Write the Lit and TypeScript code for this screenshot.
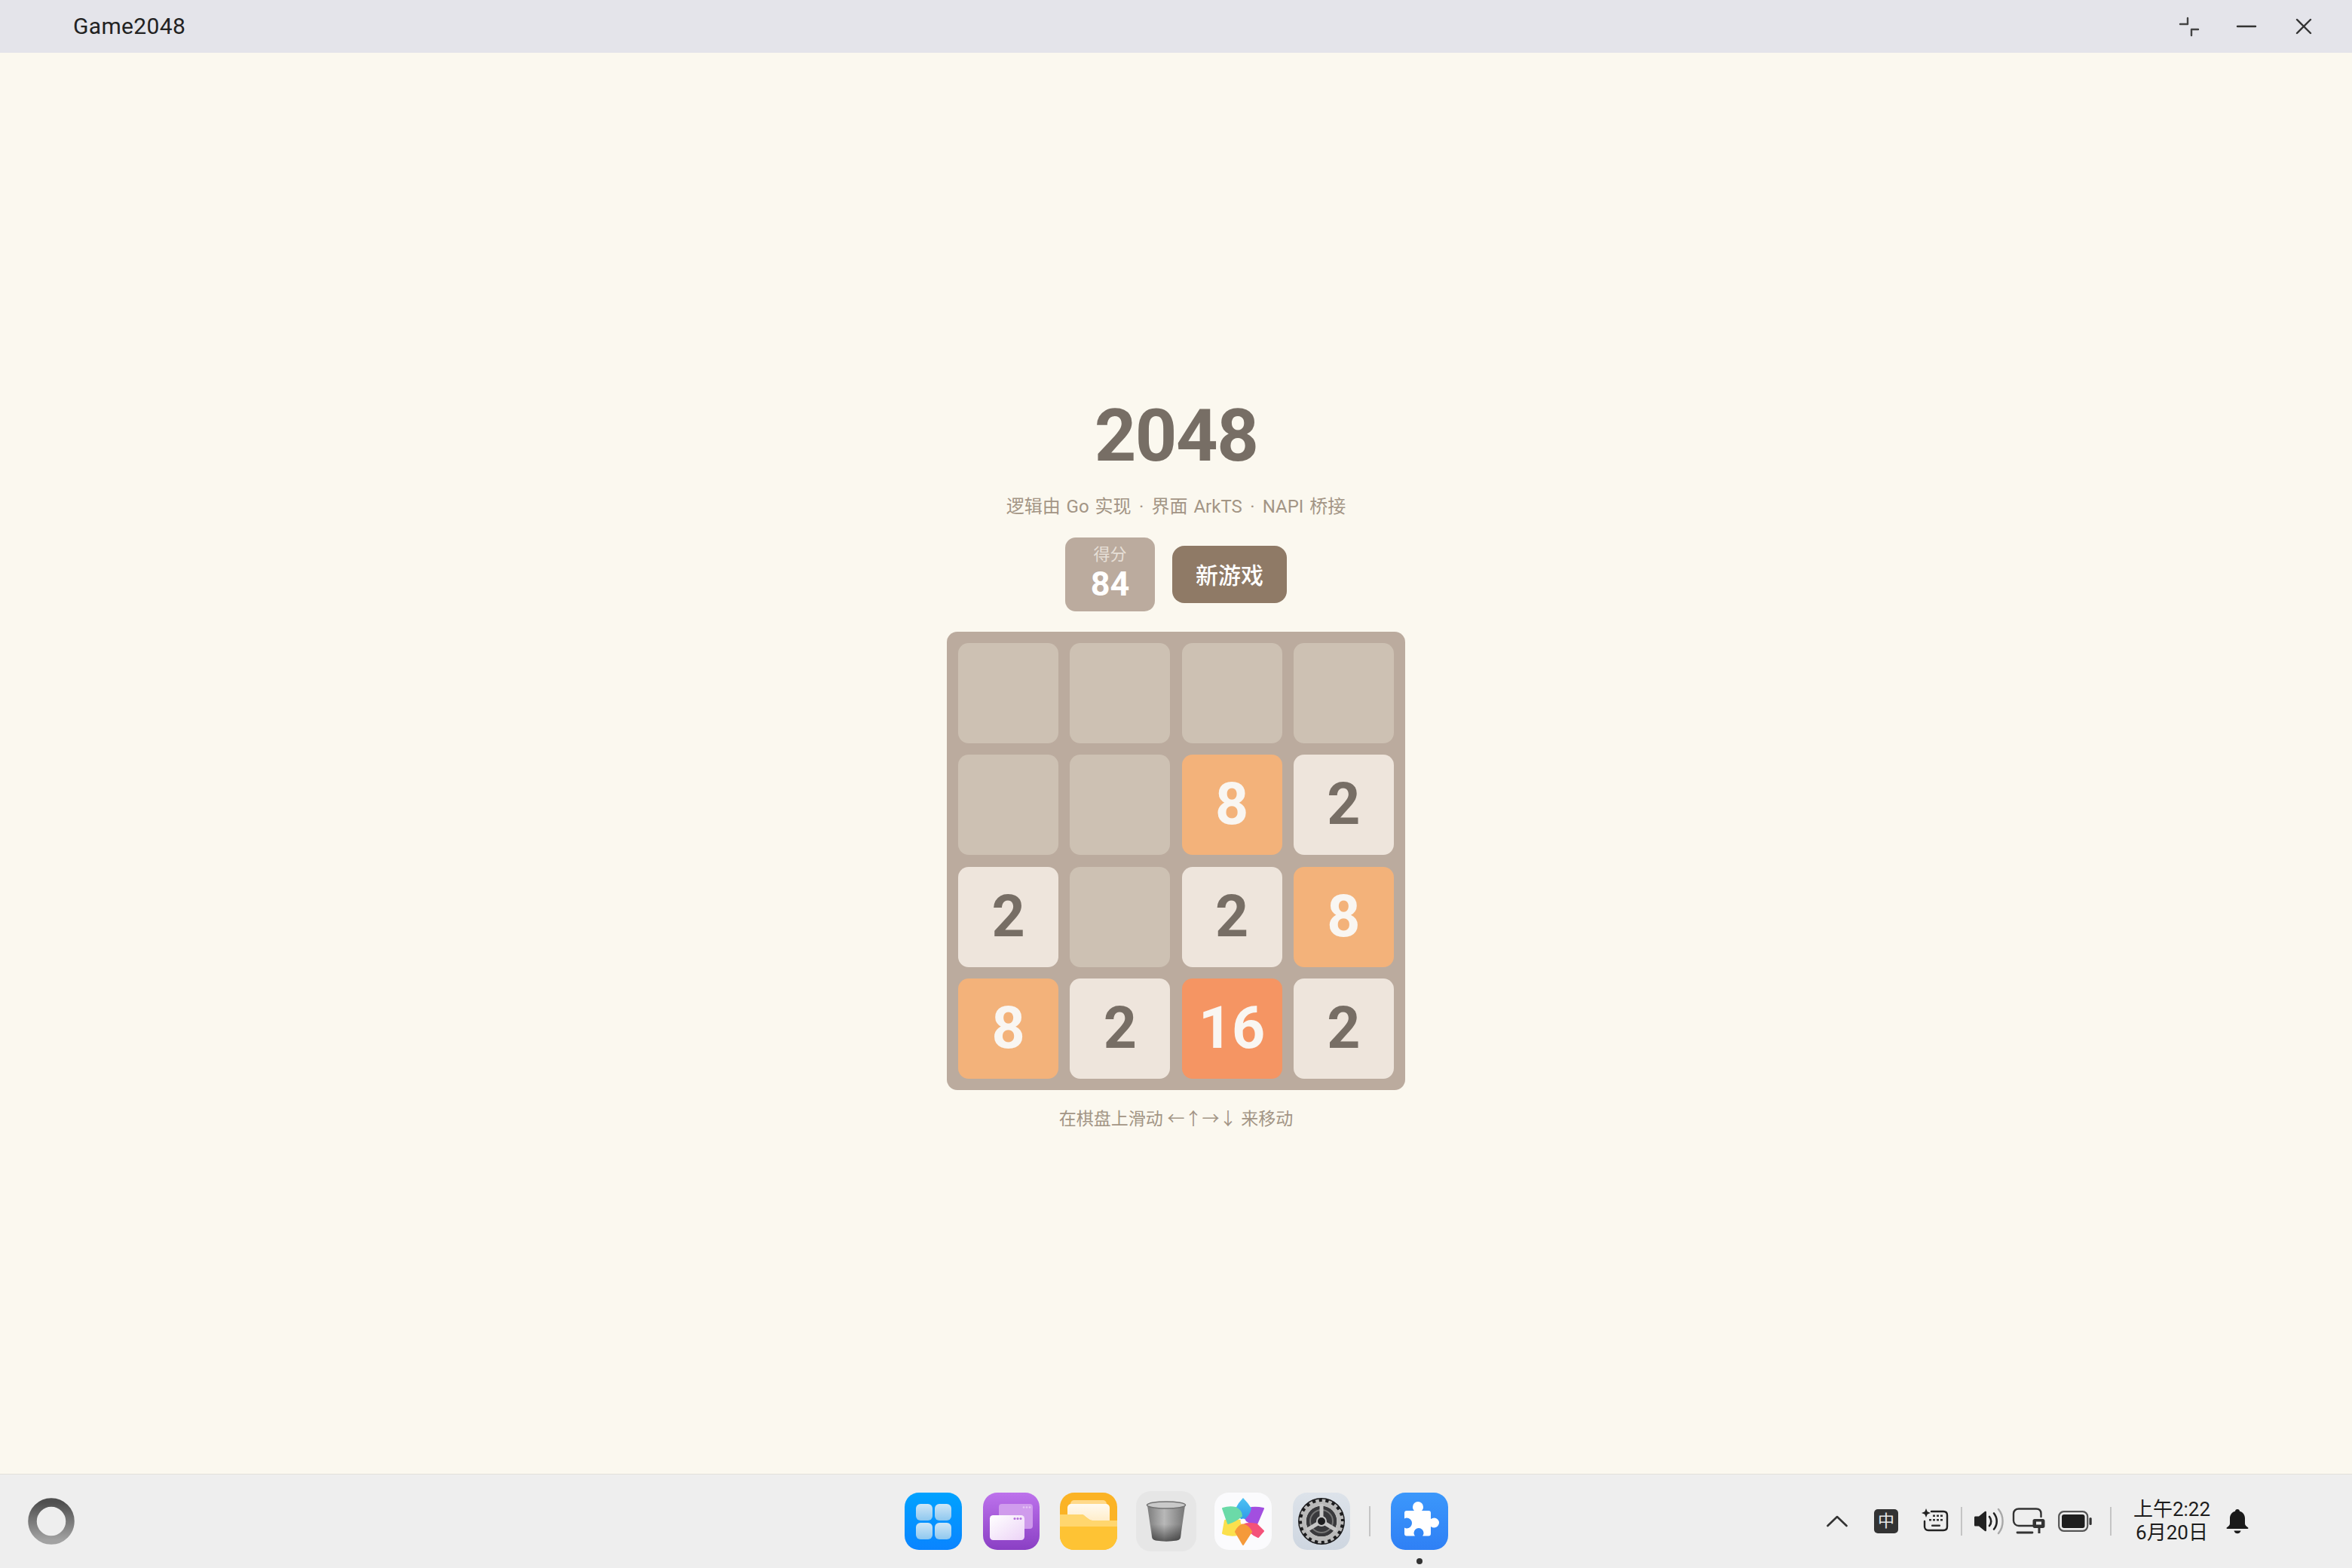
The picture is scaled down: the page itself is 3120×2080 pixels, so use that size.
import { LitElement, html, css } from "lit";
import { customElement } from "lit/decorators.js";

const cells = [0, 0, 0, 0, 0, 0, 8, 2, 2, 0, 2, 8, 8, 2, 16, 2];

@customElement("app-root")
export class AppRoot extends LitElement {
  static styles = css`
    :host { display: flex; flex-direction: column; width: 3120px; height: 2080px; overflow: hidden; font-family: Roboto, "Noto Sans CJK SC", sans-serif; background: #fbf8ef; }
    .titlebar { height: 70px; background: #e4e4ea; display: flex; align-items: center; justify-content: space-between; padding: 0 44px 0 97px; flex: none; }
    .titlebar .name { font-size: 30px; color: #222; letter-spacing: .35px; margin-top: -2px; }
    .winbtns { display: flex; gap: 36px; align-items: center; }
    .winbtns svg { width: 40px; height: 40px; display: block; }
    .page { flex: 1; display: flex; flex-direction: column; align-items: center; padding-top: 444px; min-height: 0; }
    h1 { margin: 0; font-size: 97px; line-height: 128px; font-weight: 700; color: #776e65; font-family: Roboto, sans-serif; letter-spacing: -1.500px; }
    .sub { margin-top: 12px; font-size: 24px; line-height: 36px; color: #a39585; white-space: pre; word-spacing: 2px; }
    .mid { display: inline-block; width: 11px; text-align: center; }
    .controls { margin-top: 23px; display: flex; align-items: center; gap: 23px; }
    .score { width: 119px; height: 98px; border-radius: 14px; background: #bbab9e; display: flex; flex-direction: column; align-items: center; }
    .score .lbl { font-size: 22px; line-height: 28px; color: #e6dfd6; margin-top: 9px; }
    .score .val { font-size: 45px; line-height: 48px; font-weight: 700; color: #fff; margin-top: 1px; }
    .btn { width: 152px; height: 76px; box-sizing: border-box; padding-bottom: 3px; border-radius: 16px; background: #8f7a66; color: #fff; display: flex; align-items: center; justify-content: center; font-size: 30px; font-weight: 500; }
    .board { margin-top: 27px; width: 608px; height: 608px; padding: 15.2px; box-sizing: border-box; background: #bbab9e; border-radius: 14px; display: grid; grid-template-columns: repeat(4, 1fr); grid-template-rows: repeat(4, 1fr); gap: 15.2px; }
    .cell { border-radius: 14px; background: #cdc1b3; display: flex; align-items: center; justify-content: center; font-size: 77px; font-weight: 700; font-family: Roboto, sans-serif; line-height: 1; }
    .v2 { background: #eee5dc; color: #776e65; }
    .v8 { background: #f3b27a; color: #f9f6f2; }
    .v16 { background: #f59563; color: #f9f6f2; }
    .hint { margin-top: 22px; font-size: 23px; line-height: 34px; color: #a39585; white-space: pre; }
    .taskbar { height: 125px; flex: none; box-sizing: border-box; background: #eeeeee; border-top: 1.500px solid #e3e1da; display: grid; grid-template-columns: 1fr auto 1fr; align-items: center; }
    .ring { margin-left: 37px; width: 62px; height: 62px; display: block; }
    .dock { display: flex; align-items: center; }
    .dock svg.app { display: block; width: 76px; height: 76px; flex: none; }
    .dock svg.app.trash { width: 80px; height: 80px; }
    .sep { width: 2px; height: 40px; background: #c4c4c4; flex: none; }
    .sep.short { height: 38px; }
    .ml11 { margin-left: 11px; } .ml15 { margin-left: 15px; } .ml16 { margin-left: 16px; } .ml17 { margin-left: 17px; }
    .ml24 { margin-left: 24px; } .ml25 { margin-left: 25px; } .ml26 { margin-left: 26px; } .ml27 { margin-left: 27px; }
    .ml28 { margin-left: 28px; } .ml31 { margin-left: 31px; } .ml34 { margin-left: 34px; } .ml35 { margin-left: 35px; }
    .active { position: relative; }
    .dot { position: absolute; left: 34px; bottom: -19px; width: 8px; height: 8px; border-radius: 50%; background: #333; }
    .tray { display: flex; align-items: center; justify-content: flex-end; padding-right: 137px; }
    .tray svg { display: block; flex: none; }
    .clock { font-size: 26px; line-height: 31px; color: #1c1c1c; text-align: center; width: 104px; margin: 0 20px 0 28px; white-space: nowrap; }
    .ime { width: 32px; height: 32px; border-radius: 5px; background: #333; color: #e8e8e8; display: flex; align-items: center; justify-content: center; font-size: 22px; line-height: 1; }
  `;

  render() {
    return html`
      <div class="titlebar">
        <div class="name">Game2048</div>
        <div class="winbtns">
          <svg viewBox="0 0 40 40" fill="none" stroke="#444" stroke-width="2.400" stroke-linecap="round" stroke-linejoin="round">
            <path d="M8 17h10V9" /><path d="M32 24H23v8"/>
          </svg>
          <svg viewBox="0 0 40 40" fill="none" stroke="#333" stroke-width="2.400" stroke-linecap="round"><path d="M8 20h24"/></svg>
          <svg viewBox="0 0 40 40" fill="none" stroke="#333" stroke-width="2.400" stroke-linecap="round"><path d="M11 11l18 18M29 11L11 29"/></svg>
        </div>
      </div>
      <div class="page">
        <h1>2048</h1>
        <div class="sub">逻辑由 Go 实现 <span class="mid">·</span> 界面 ArkTS <span class="mid">·</span> NAPI 桥接</div>
        <div class="controls">
          <div class="score"><span class="lbl">得分</span><span class="val">84</span></div>
          <div class="btn">新游戏</div>
        </div>
        <div class="board">
          ${cells.map((v) => html`<div class="cell ${v ? "v" + v : ""}">${v || ""}</div>`)}
        </div>
        <div class="hint">在棋盘上滑动 ←↑→↓ 来移动</div>
      </div>
      <div class="taskbar">
        <svg class="ring" viewBox="0 0 62 62">
          <defs><linearGradient id="rg" x1="0" y1="0" x2="0" y2="1"><stop offset="0" stop-color="#4f4f4f"/><stop offset="1" stop-color="#a2a2a2"/></linearGradient></defs>
          <circle cx="31" cy="31" r="25" fill="none" stroke="url(#rg)" stroke-width="11.500"/>
        </svg>
        <div class="dock">
          <svg class="app" viewBox="0 0 76 76">
            <defs><linearGradient id="b1" x1="0" y1="0" x2="0" y2="1"><stop offset="0" stop-color="#00a2ff"/><stop offset="1" stop-color="#0a84ff"/></linearGradient>
            <linearGradient id="t1" x1="0" y1="0" x2="0" y2="1"><stop offset="0" stop-color="#cfe6f6"/><stop offset="1" stop-color="#8fc8ef"/></linearGradient></defs>
            <rect width="76" height="76" rx="19" fill="url(#b1)"/>
            <g fill="url(#t1)"><rect x="15" y="15" width="22" height="22" rx="6"/><rect x="40" y="15" width="22" height="22" rx="6"/><rect x="15" y="40" width="22" height="22" rx="6"/><rect x="40" y="40" width="22" height="22" rx="6"/></g>
          </svg>
          <svg class="app ml28" viewBox="0 0 76 76">
            <defs><linearGradient id="b2" x1="0" y1="0" x2="0" y2="1"><stop offset="0" stop-color="#bd72ec"/><stop offset="1" stop-color="#8a3fc4"/></linearGradient>
            <linearGradient id="w2" x1="0" y1="0" x2="1" y2="1"><stop offset="0" stop-color="#fff"/><stop offset="1" stop-color="#ecd3f6"/></linearGradient></defs>
            <rect width="75" height="76" rx="19" fill="url(#b2)"/>
            <rect x="21" y="15" width="45" height="33" rx="4" fill="#d6a6ef" opacity=".85"/>
            <rect x="9" y="30" width="46" height="33" rx="4.500" fill="url(#w2)"/>
            <g fill="#b56fdc"><circle cx="42" cy="34.500" r="1.500"/><circle cx="46" cy="34.500" r="1.500"/><circle cx="50" cy="34.500" r="1.500"/></g>
            <g fill="#e5c5f5"><circle cx="54" cy="19.500" r="1.300"/><circle cx="58" cy="19.500" r="1.300"/><circle cx="62" cy="19.500" r="1.300"/></g>
          </svg>
          <svg class="app ml26" viewBox="0 0 76 76">
            <defs><linearGradient id="w3" x1="0" y1="0" x2="0" y2="1"><stop offset="0" stop-color="#fffaf0"/><stop offset="1" stop-color="#ffe9bd"/></linearGradient></defs>
            <rect width="76" height="76" rx="19" fill="#fbb325"/>
            <rect x="14" y="10" width="48" height="30" rx="5" fill="#ffd98a"/>
            <rect x="10" y="15" width="56" height="30" rx="5" fill="url(#w3)"/>
            <path d="M0 29h28c3 0 4 1 6 3l4 3c1.500 1 3 2 5 2h33v20c0 11-8 19-19 19H19C8 76 0 68 0 57z" fill="#fec334"/>
            <path d="M0 29h28c3 0 4 1 6 3l4 3c1.500 1 3 2 5 2h33v8H0z" fill="#ffd66e"/>
          </svg>
          <svg class="app trash ml25" viewBox="0 0 80 80">
            <defs><linearGradient id="tr" x1="0" y1="0" x2="1" y2="0"><stop offset="0" stop-color="#7d7d7d"/><stop offset=".45" stop-color="#b8b8b8"/><stop offset="1" stop-color="#767676"/></linearGradient>
            <linearGradient id="trb" x1="0" y1="0" x2="0" y2="1"><stop offset="0" stop-color="#000" stop-opacity="0"/><stop offset="1" stop-color="#000" stop-opacity=".5"/></linearGradient></defs>
            <rect width="80" height="80" rx="20" fill="#e6e6e6"/>
            <path d="M15 19l6 42c.4 3 3 4 5 4.500 9 1.500 19 1.500 28 0 2-.5 4.600-1.500 5-4.500l6-42z" fill="url(#tr)"/>
            <path d="M20 44l1.200 17c.4 3 3 4 5 4.500 9 1.500 19 1.500 28 0 2-.5 4.600-1.500 5-4.500L61 44z" fill="url(#trb)"/>
            <ellipse cx="40" cy="18.500" rx="25.500" ry="4.500" fill="#c9c9c9" stroke="#727272" stroke-width="1.500"/>
          </svg>
          <svg class="app ml24" viewBox="0 0 76 76">
            <defs><linearGradient id="p1" x1="0" y1="0" x2="0" y2="1"><stop offset="0" stop-color="#4dc3f3"/><stop offset="1" stop-color="#2f9ae8"/></linearGradient></defs>
            <rect width="76" height="76" rx="19" fill="#fbfbfd"/>
            <g stroke-width="2" stroke-linejoin="round">
              <path d="M65 21 Q56 19 49 20 L39 34 Q47 42 56 42z" fill="#a24fe0" stroke="#a24fe0"/>
              <path d="M65 51 L56 42 Q47 40 39 42 Q46 54 58 59z" fill="#f4527a" stroke="#f4527a"/>
              <path d="M11 54 L14 37 Q24 35 34 37 Q36 48 31 56 Q20 58 11 54z" fill="#fbe04d" stroke="#fbe04d"/>
              <path d="M38 69 L28 52 Q31 45 38 42 Q46 45 49 52z" fill="#f59a3a" stroke="#f59a3a"/>
              <path d="M38 7 Q44 13 49 21 Q47 31 38 37 Q29 31 28 21 Q32 13 38 7z" fill="url(#p1)" stroke="none"/>
              <path d="M11 21 Q20 18 28 20 Q36 24 36 31 Q28 38 18 41z" fill="#6bdaa8" stroke="#6bdaa8"/>
            </g>
            <circle cx="38" cy="38" r="3.500" fill="#fff"/>
          </svg>
          <svg class="app ml28" viewBox="0 0 76 76">
            <defs><linearGradient id="s1" x1="0" y1="0" x2="0" y2="1"><stop offset="0" stop-color="#dde3ea"/><stop offset="1" stop-color="#ced6e0"/></linearGradient></defs>
            <rect width="76" height="76" rx="19" fill="url(#s1)"/>
            <circle cx="38" cy="38" r="31" fill="#1d1d1f"/>
            <circle cx="38" cy="38" r="23" fill="none" stroke="#b9b9b9" stroke-width="6"/>
            <circle cx="38" cy="38" r="27" fill="none" stroke="#b9b9b9" stroke-width="5" stroke-dasharray="4.500 4"/>
            <circle cx="38" cy="38" r="20" fill="#39393c"/>
            <circle cx="38" cy="38" r="15" fill="none" stroke="#777" stroke-width="2"/>
            <path d="M38 38V15M38 38L18 50M38 38L58 50" stroke="#c6c6c6" stroke-width="5"/>
            <circle cx="38" cy="38" r="6" fill="#1d1d1f" stroke="#c6c6c6" stroke-width="2"/>
          </svg>
          <div class="sep ml25"></div>
          <div class="active ml27">
            <svg class="app" viewBox="0 0 76 76">
              <defs><linearGradient id="pz" x1="0" y1="0" x2="0" y2="1"><stop offset="0" stop-color="#3b97fb"/><stop offset="1" stop-color="#2f80f5"/></linearGradient></defs>
              <rect width="76" height="76" rx="19" fill="url(#pz)"/>
              <path d="M21 24h10c-1.500-1.500-2-3-2-5a7 7 0 0 1 14 0c0 2-.5 3.500-2 5h9a3 3 0 0 1 3 3v8c1.500-1 3-1.500 4.500-1.500a6.500 6.500 0 0 1 0 13c-1.500 0-3-.5-4.500-1.500v9.500a3 3 0 0 1-3 3H42c1-1.500 1.500-2.500 1.500-4a6.500 6.500 0 0 0-13 0c0 1.500.5 2.500 1.500 4H21a3 3 0 0 1-3-3v-8c1 .7 2 1 3 1a7 7 0 0 0 0-14c-1 0-2 .3-3 1V27a3 3 0 0 1 3-3z" fill="#fff"/>
            </svg>
            <div class="dot"></div>
          </div>
        </div>
        <div class="tray">
          <svg width="28" height="16" viewBox="0 0 28 16" fill="none" stroke="#333" stroke-width="2.600" stroke-linecap="round" stroke-linejoin="round"><path d="M1.500 14L14 2l12.500 12"/></svg>
          <div class="ime ml35">中</div>
          <svg class="ml31" width="36" height="36" viewBox="0 0 36 36" fill="none">
            <path d="M6 1l1.700 4.300L12 7 7.700 8.700 6 13 4.300 8.700 0 7l4.300-1.700z" fill="#222"/>
            <path d="M13 5h16c3 0 5 2 5 5v15c0 3-2 5-5 5H9c-3 0-5-2-5-5v-7" stroke="#222" stroke-width="2.400" stroke-linecap="round"/>
            <g fill="#333"><rect x="15" y="9.500" width="3" height="2.500"/><rect x="20" y="9.500" width="3" height="2.500"/><rect x="25" y="9.500" width="3" height="2.500"/><rect x="10" y="15" width="3" height="2.500"/><rect x="15" y="15" width="3" height="2.500"/><rect x="20" y="15" width="3" height="2.500"/><rect x="25" y="15" width="3" height="2.500"/><rect x="13" y="22.500" width="12" height="2.400" rx="1"/></g>
          </svg>
          <div class="sep short ml16"></div>
          <svg class="ml15" width="40" height="36" viewBox="0 0 40 36" fill="none">
            <path d="M1 13v10c0 1 .6 1.500 1.500 1.500H7L15 31c1 .7 2 .2 2-1V6c0-1.200-1-1.700-2-1L7 11.500H2.500C1.600 11.500 1 12 1 13z" fill="#222"/>
            <path d="M21 12c3 3.500 3 8.500 0 12" stroke="#222" stroke-width="2.600" stroke-linecap="round"/>
            <path d="M27 7.500c5 6 5 15 0 21" stroke="#222" stroke-width="2.600" stroke-linecap="round"/>
            <path d="M33 2c7.500 9 7.500 23 0 32" stroke="#a8a8a8" stroke-width="2.400" stroke-linecap="round"/>
          </svg>
          <svg class="ml11" width="44" height="36" viewBox="0 0 44 36" fill="none">
            <path d="M29 24H9c-4 0-7-3-7-7V8c0-4 3-6.500 7-6.500h23c4 0 6.500 2.500 6.500 6.500v4" stroke="#333" stroke-width="2.400" stroke-linecap="round"/>
            <path d="M7 33h20" stroke="#333" stroke-width="2.800" stroke-linecap="round"/>
            <path d="M30 15h11c1.500 0 2.500 1 2.500 2.500v7c0 1.500-1 2.500-2.500 2.500h-3.500v7h-3v-7H30c-1.500 0-2.500-1-2.500-2.500v-7c0-1.500 1-2.500 2.500-2.500z" fill="#333"/>
            <rect x="32" y="18.500" width="7" height="4" fill="#eee"/>
          </svg>
          <svg class="ml17" width="45" height="28" viewBox="0 0 45 28" fill="none">
            <rect x="1.200" y="1.200" width="38" height="25.600" rx="6.500" stroke="#555" stroke-width="2.200"/>
            <rect x="5" y="5" width="30.500" height="18" rx="3" fill="#1e1e1e"/>
            <rect x="41.500" y="9" width="3.200" height="10" rx="1.600" fill="#333"/>
          </svg>
          <div class="sep short ml24"></div>
          <div class="clock"><div>上午2:22</div><div>6月20日</div></div>
          <svg width="30" height="36" viewBox="0 0 30 36"><path d="M15 2c-1.800 0-3 1.200-3 2.700C7.500 6 5 9.500 5 14v7c0 2-1.500 3.500-4 5.200-.8.600-.6 1.800.5 1.800h27c1.100 0 1.300-1.200.5-1.800-2.500-1.700-4-3.200-4-5.200v-7c0-4.500-2.500-8-7-9.300C18 3.200 16.800 2 15 2z" fill="#1a1a1a"/><path d="M10.500 30.500h9c-.5 2.500-2.500 3.700-4.500 3.700s-4-1.200-4.500-3.700z" fill="#1a1a1a"/></svg>
        </div>
      </div>
    `;
  }
}
